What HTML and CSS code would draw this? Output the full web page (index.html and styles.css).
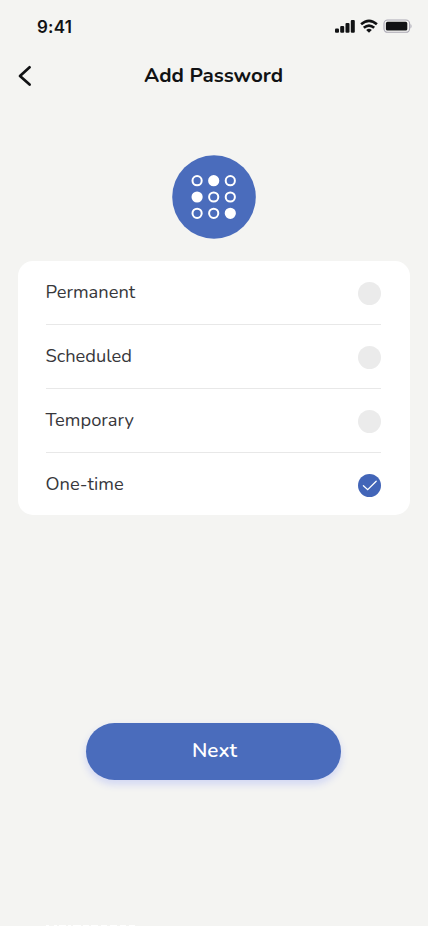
FILE: index.html
```html
<!DOCTYPE html>
<html lang="en">
<head>
<meta charset="utf-8">
<title>Add Password</title>
<link rel="stylesheet" href="styles.css">
</head>
<body>
<main class="screen">
  <div class="status">
    <span class="time">9:41</span>
    <svg class="indicators" width="78" height="16" viewBox="0 0 78 16" fill="#111214">
      <rect x="0" y="9.4" width="4" height="4.4" rx="1.1"/>
      <rect x="5.2" y="6.9" width="4" height="6.9" rx="1.1"/>
      <rect x="10.5" y="4" width="4" height="9.8" rx="1.1"/>
      <rect x="15.8" y="1" width="4" height="12.8" rx="1.1"/>
      <g fill="none" stroke="#111214" stroke-width="2.6">
        <path d="M26.1 5.3 Q34 -1.6 41.9 5.3"/>
        <path d="M28.8 8.8 Q34 4.3 39.2 8.8"/>
      </g>
      <path d="M31.2 10.9 Q34 8.6 36.8 10.9 L34 13.7Z"/>
      <rect x="49" y="1" width="25.6" height="12.3" rx="3.6" fill="none" stroke="#aaa8b4" stroke-width="1.1"/>
      <rect x="50.9" y="2.8" width="21.4" height="8.7" rx="1.6"/>
      <path d="M75.5 5v4.4c1.4-.6 1.4-3.8 0-4.4z" fill="#aaa8b4"/>
    </svg>
  </div>
  <header class="header">
    <svg class="back" width="16" height="24" viewBox="0 0 16 24" fill="none" stroke="#111214" stroke-width="2.7" stroke-linecap="round" stroke-linejoin="round"><path d="M11.6 3.3 2 12l9.6 8.5"/></svg>
    <h1 class="title">Add Password</h1>
  </header>
  <svg class="emblem" width="84" height="84" viewBox="0 0 84 84">
    <circle cx="42" cy="42" r="41.8" fill="#4a6cbc"/>
    <g fill="none" stroke="#fff" stroke-width="2">
      <circle cx="25.1" cy="25.7" r="4.6"/><circle cx="41.7" cy="25.7" r="4.6" fill="#fff"/><circle cx="58.3" cy="25.7" r="4.6"/>
      <circle cx="25.1" cy="42" r="4.6" fill="#fff"/><circle cx="41.7" cy="42" r="4.6"/><circle cx="58.3" cy="42" r="4.6"/>
      <circle cx="25.1" cy="58.3" r="4.6"/><circle cx="41.7" cy="58.3" r="4.6"/><circle cx="58.3" cy="58.3" r="4.6" fill="#fff"/>
    </g>
  </svg>
  <section class="card">
    <div class="option"><span class="label">Permanent</span><i class="radio"></i></div>
    <div class="option"><span class="label">Scheduled</span><i class="radio"></i></div>
    <div class="option"><span class="label">Temporary</span><i class="radio"></i></div>
    <div class="option"><span class="label">One-time</span><i class="radio checked"><svg width="23" height="23" viewBox="0 0 23 23" fill="none" stroke="#fff" stroke-width="1.3" stroke-linecap="round"><path d="M5.4 11.7l4.3 4 8.5-8.5"/></svg></i></div>
  </section>
  <button class="next">Next</button>
  <svg class="edge" width="428" height="1" viewBox="0 0 428 1" stroke="#fff" stroke-width="1"><path d="M46 .5h3M54 .5h3M59 .5h7M68 .5h3M73 .5h8M83 .5h6M91 .5h7M101 .5h6M110 .5h7M120 .5h6M129 .5h6"/></svg>
</main>
</body>
</html>
```

FILE: styles.css
```css
* { box-sizing: border-box; }
body { margin: 0; background: #f4f4f2; font-family: Nunito, "Open Sans", sans-serif; color: #111214; }
.screen { width: 428px; height: 926px; overflow: hidden; display: flex; flex-direction: column; align-items: center; }
.status { width: 100%; height: 52px; padding: 1px 15px 0 37px; display: flex; align-items: center; justify-content: space-between; }
.time { font: 600 17px/20px Inter, sans-serif; letter-spacing: 0.2px; }
.header { width: 100%; height: 48px; padding: 0 18px; display: grid; grid-template-columns: 16px 1fr 16px; align-items: center; }
.title { margin: 0 1px 2px 0; font-size: 20.6px; line-height: 28px; font-weight: 700; text-align: center; white-space: nowrap; }
.emblem { margin-top: 55px; flex: none; }
.card { width: 392px; height: 254px; margin-top: 22px; padding: 0 29px 0 27.5px; background: #fff; border-radius: 15px; flex: none; }
.option { height: 64px; display: flex; align-items: center; justify-content: space-between; border-bottom: 1px solid #e8e8e8; }
.option:last-child { border-bottom: 0; height: 62px; }
.label { font-size: 18.3px; line-height: 24px; color: #37373b; margin-top: -1px; }
.radio { width: 23px; height: 23px; border-radius: 50%; background: #ebebeb; margin-top: 2px; }
.checked { background: #4265b8; }
.checked svg { display: block; }
.next { width: 255px; height: 57px; margin: 208px 1px 0 0; padding: 0 0 3px 2px; border: 0; border-radius: 29px; background: #4a6cbc; color: #fff; font: 600 20.7px/28px Nunito, "Open Sans", sans-serif; box-shadow: 0 4px 7px 1px #d5daf3; flex: none; }
.edge { display: block; margin-top: auto; flex: none; }
```
